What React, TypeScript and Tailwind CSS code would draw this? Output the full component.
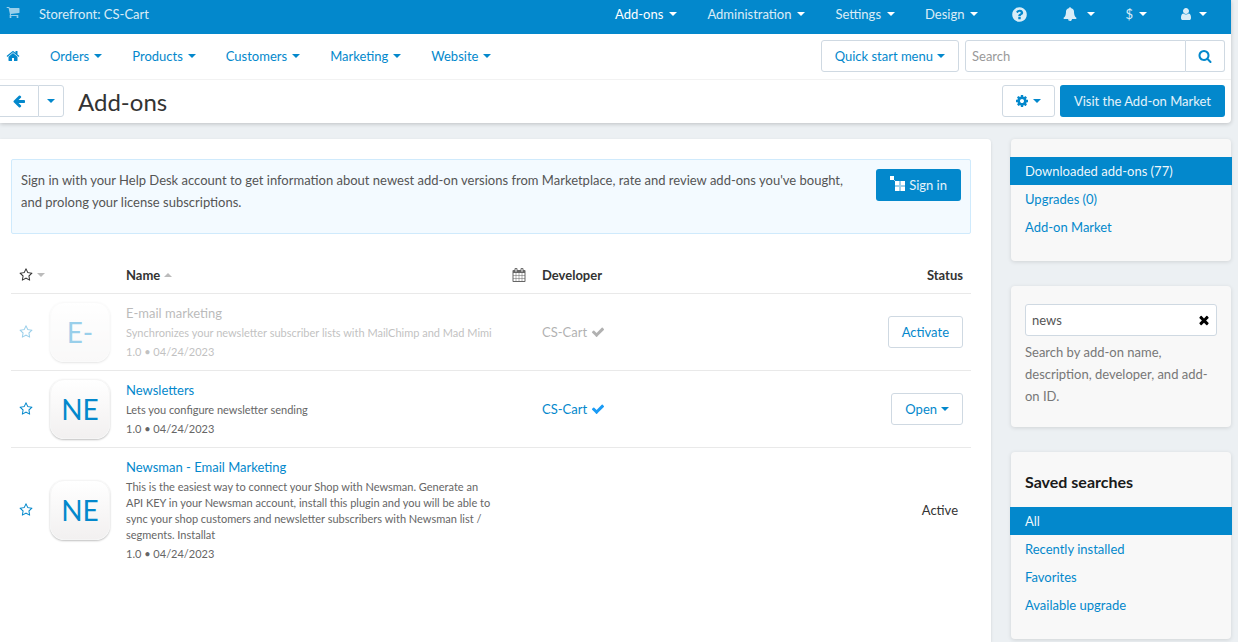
import { ReactNode } from "react";

const PATHS = {
  cart: "M704 1536q0 52-38 90t-90 38-90-38-38-90 38-90 90-38 90 38 38 90zm896 0q0 52-38 90t-90 38-90-38-38-90 38-90 90-38 90 38 38 90zm128-1088v512q0 24-16.5 42.5t-40.5 21.5l-1044 122q13 60 13 70 0 16-24 64h920q26 0 45 19t19 45-19 45-45 19h-1024q-26 0-45-19t-19-45q0-11 8-31.5t16-36 21.5-40 15.5-29.5l-177-823h-204q-26 0-45-19t-19-45 19-45 45-19h256q16 0 28.5 6.5t19.5 15.5 13 24.5 8 26 5.5 29.5 4.5 26h1201q26 0 45 19t19 45z",
  home: "M1472 992v480q0 26-19 45t-45 19h-384v-384h-256v384h-384q-26 0-45-19t-19-45v-480q0-1 .5-3t.5-3l575-474 575 474q1 2 1 6zm223-69l-62 74q-8 9-21 11h-3q-13 0-21-7l-692-577-692 577q-12 8-24 7-13-2-21-11l-62-74q-8-10-7-23.5t11-21.5l719-599q32-26 76-26t76 26l244 204v-195q0-14 9-23t23-9h192q14 0 23 9t9 23v408l219 182q10 8 11 21.5t-7 23.5z",
  search: "M1216 832q0-185-131.5-316.5t-316.5-131.5-316.5 131.5-131.5 316.5 131.5 316.5 316.5 131.5 316.5-131.5 131.5-316.5zm512 832q0 52-38 90t-90 38q-54 0-90-38l-343-342q-179 124-399 124-143 0-273.5-55.5t-225-150-150-225-55.5-273.5 55.5-273.5 150-225 225-150 273.5-55.5 273.5 55.5 225 150 150 225 55.5 273.5q0 220-124 399l343 343q37 37 37 90z",
  arrowLeft: "M1664 896v128q0 53-32.5 90.5t-84.5 37.5h-704l293 294q38 36 38 90t-38 90l-75 76q-37 37-90 37-52 0-91-37l-651-652q-37-37-37-90 0-52 37-91l651-650q38-38 91-38 52 0 90 38l75 74q38 38 38 91t-38 91l-293 293h704q52 0 84.5 37.5t32.5 90.5z",
  check: "M1671 566q0 40-28 68l-724 724-136 136q-28 28-68 28t-68-28l-136-136-362-362q-28-28-28-68t28-68l136-136q28-28 68-28t68 28l294 295 656-657q28-28 68-28t68 28l136 136q28 28 28 68z",
  times: "M1490 1322q0 40-28 68l-136 136q-28 28-68 28t-68-28l-294-294-294 294q-28 28-68 28t-68-28l-136-136q-28-28-28-68t28-68l294-294-294-294q-28-28-28-68t28-68l136-136q28-28 68-28t68 28l294 294 294-294q28-28 68-28t68 28l136 136q28 28 28 68t-28 68l-294 294 294 294q28 28 28 68z",
  cog: "M1152 896q0-106-75-181t-181-75-181 75-75 181 75 181 181 75 181-75 75-181zm512-109v222q0 12-8 23t-20 13l-185 28q-19 54-39 91 35 50 107 138 10 12 10 25t-9 23q-27 37-99 108t-94 71q-12 0-26-9l-138-108q-44 23-91 38-16 136-29 186-7 28-36 28h-222q-14 0-24.5-8.5t-11.5-21.5l-28-184q-49-16-90-37l-141 107q-10 9-25 9-14 0-25-11-126-114-165-168-7-10-7-23 0-12 8-23 15-21 51-66.5t54-70.5q-27-50-41-99l-183-27q-13-2-21-12.5t-8-23.5v-222q0-12 8-23t19-13l186-28q14-46 39-92-40-57-107-138-10-12-10-24 0-10 9-23 26-36 98.5-107.5t94.5-71.5q13 0 26 10l138 107q44-23 91-38 16-136 29-186 7-28 36-28h222q14 0 24.5 8.5t11.5 21.5l28 184q49 16 90 37l142-107q9-9 24-9 13 0 25 10 129 119 165 170 7 8 7 22 0 12-8 23-15 21-51 66.5t-54 70.5q26 50 41 98l183 28q13 2 21 12.5t8 23.5z",
  question: "M1024 1376v-192q0-14-9-23t-23-9h-192q-14 0-23 9t-9 23v192q0 14 9 23t23 9h192q14 0 23-9t9-23zm256-672q0-88-55.5-163t-138.5-116-170-41q-243 0-371 213-15 24 8 42l132 100q7 6 19 6 16 0 25-12 53-68 86-92 34-24 86-24 48 0 85.5 26t37.5 59q0 38-20 61t-68 45q-63 28-115.5 86.5t-52.5 125.5v36q0 14 9 23t23 9h192q14 0 23-9t9-23q0-19 21.5-49.5t54.5-49.5q32-18 49-28.5t46-35 44.5-48 28-60.5 12.5-81zm384 192q0 209-103 385.5t-279.5 279.5-385.5 103-385.5-103-279.5-279.5-103-385.5 103-385.5 279.5-279.5 385.5-103 385.5 103 279.5 279.5 103 385.5z",
  star: "M1201 1004l306-297-422-62-189-382-189 382-422 62 306 297-73 421 378-199 377 199zm527-357q0 22-26 48l-363 354 86 500q1 7 1 20 0 50-41 50-19 0-40-12l-449-236-449 236q-22 12-40 12-21 0-31.5-14.5t-10.5-35.5q0-6 2-20l86-500-364-354q-25-27-25-48 0-37 56-46l502-73 225-455q19-41 49-41t49 41l225 455 502 73q56 9 56 46z",
  bell: "M912 1696q0-16-16-16-59 0-101.5-42.5t-42.5-101.5q0-16-16-16t-16 16q0 73 51.5 124.5t124.5 51.5q16 0 16-16zm816-288q0 52-38 90t-90 38h-448q0 106-75 181t-181 75-181-75-75-181h-448q-52 0-90-38t-38-90q50-42 91-88t85-119.5 74.5-158.5 50-206 19.5-260q0-152 117-282.5t307-158.5q-8-19-8-39 0-40 28-68t68-28 68 28 28 68q0 20-8 39 190 28 307 158.5t117 282.5q0 139 19.5 260t50 206 74.5 158.5 85 119.5 91 88z",
  user: "M1536 1399q0 109-62.5 187t-150.5 78h-854q-88 0-150.5-78t-62.5-187q0-85 8.5-160.5t31.5-152 58.5-131 94-89 134.5-34.5q131 128 313 128t313-128q76 0 134.5 34.5t94 89 58.5 131 31.5 152 8.5 160.5zm-256-887q0 159-112.5 271.5t-271.5 112.5-271.5-112.5-112.5-271.5 112.5-271.5 271.5-112.5 271.5 112.5 112.5 271.5z",
  calendar: "M192 1664h288v-288h-288v288zm352 0h320v-288h-320v288zm-352-352h288v-320h-288v320zm352 0h320v-320h-320v320zm-352-384h288v-288h-288v288zm736 736h320v-288h-320v288zm-384-736h320v-288h-320v288zm768 736h288v-288h-288v288zm-384-352h320v-320h-320v320zm-352-864v-288q0-13-9.5-22.5t-22.5-9.5h-64q-13 0-22.5 9.5t-9.5 22.5v288q0 13 9.5 22.5t22.5 9.5h64q13 0 22.5-9.5t9.5-22.5zm736 864h288v-320h-288v320zm-384-384h320v-288h-320v288zm384 0h288v-288h-288v288zm32-480v-288q0-13-9.5-22.5t-22.5-9.5h-64q-13 0-22.5 9.5t-9.5 22.5v288q0 13 9.5 22.5t22.5 9.5h64q13 0 22.5-9.5t9.5-22.5zm384-64v1280q0 52-38 90t-90 38h-1408q-52 0-90-38t-38-90v-1280q0-52 38-90t90-38h128v-96q0-66 47-113t113-47h64q66 0 113 47t47 113v96h384v-96q0-66 47-113t113-47h64q66 0 113 47t47 113v96h128q52 0 90 38t38 90z",
};

const Icon = ({ name, className }: { name: keyof typeof PATHS; className: string }) => (
  <svg viewBox="0 0 1792 1792" fill="currentColor" className={className} aria-hidden="true">
    <path d={PATHS[name]} />
  </svg>
);

const Caret = () => (
  <span className="block border-x-4 border-t-4 border-x-transparent border-t-current" />
);

const btn =
  "flex h-8 items-center justify-center gap-1 rounded-[3px] border border-[#cfd9e2] bg-white text-[#0388cc] whitespace-nowrap";

interface Addon {
  initials: string;
  name: string;
  description: string;
  developer?: string;
  status: "disabled" | "open" | "active";
}

const addons: Addon[] = [
  {
    initials: "E-",
    name: "E-mail marketing",
    description: "Synchronizes your newsletter subscriber lists with MailChimp and Mad Mimi",
    developer: "CS-Cart",
    status: "disabled",
  },
  {
    initials: "NE",
    name: "Newsletters",
    description: "Lets you configure newsletter sending",
    developer: "CS-Cart",
    status: "open",
  },
  {
    initials: "NE",
    name: "Newsman - Email Marketing",
    description:
      "This is the easiest way to connect your Shop with Newsman. Generate an API KEY in your Newsman account, install this plugin and you will be able to sync your shop customers and newsletter subscribers with Newsman list / segments. Installat",
    status: "active",
  },
];

const TopItem = ({ label, active, children }: { label: string; active?: boolean; children?: ReactNode }) => (
  <button aria-label={label} className="flex items-center gap-[6px] text-white">
    <span className={active ? "" : "opacity-85"}>{children ?? label}</span>
    <Caret />
  </button>
);

const TopBar = () => (
  <div className="flex h-[34px] items-start justify-between bg-[#0388cc] pl-[6px] pr-6">
    <div className="flex h-7 items-center gap-[19px] text-white">
      <a href="#" aria-label="View storefront" className="mb-1">
        <Icon name="cart" className="h-[14px] w-[14px] opacity-60" />
      </a>
      <a href="#" className="opacity-85">Storefront: CS-Cart</a>
    </div>
    <nav className="flex h-7 items-center gap-[30px]">
      <TopItem label="Add-ons" active />
      <TopItem label="Administration" />
      <TopItem label="Settings" />
      <TopItem label="Design" />
      <button aria-label="Help" className="ml-[3px] mr-[5px] text-white opacity-85">
        <Icon name="question" className="h-[17px] w-[17px]" />
      </button>
      <button aria-label="Notifications" className="flex items-center gap-[10px] text-white">
        <Icon name="bell" className="h-[14px] w-[14px] opacity-85" />
        <Caret />
      </button>
      <TopItem label="Currency">$</TopItem>
      <button aria-label="Account" className="ml-[2px] flex items-center gap-[6px] text-white">
        <Icon name="user" className="h-[14px] w-[14px] opacity-85" />
        <Caret />
      </button>
    </nav>
  </div>
);

const MainMenu = () => (
  <div className="flex h-[46px] items-start border-b border-[#f2f2f2] px-[6px] pt-[6px]">
    <nav className="flex h-8 items-center gap-[30px] text-[#0388cc]">
      <a href="#" aria-label="Home">
        <Icon name="home" className="h-[14px] w-[14px]" />
      </a>
      {["Orders", "Products", "Customers", "Marketing", "Website"].map((item) => (
        <button key={item} className="flex items-center gap-[5px]">
          {item}
          <Caret />
        </button>
      ))}
    </nav>
    <div className="ml-auto flex gap-[6px]">
      <button className={`${btn} px-[13px]`}>
        Quick start menu
        <Caret />
      </button>
      <form className="flex" onSubmit={(e) => e.preventDefault()}>
        <input
          type="text"
          aria-label="Search"
          placeholder="Search"
          className="h-8 w-[221px] rounded-l-[3px] border border-[#cfd9e2] bg-white px-[6px] text-[#555] placeholder:text-[#999]"
        />
        <button
          type="submit"
          aria-label="Find"
          className="flex h-8 w-[39px] items-center justify-center rounded-r-[3px] border border-l-0 border-[#cfd9e2] text-[#0388cc]"
        >
          <Icon name="search" className="h-[14px] w-[14px]" />
        </button>
      </form>
    </div>
  </div>
);

const TitleBar = () => (
  <div className="flex h-[43px] items-start pr-[6px] pt-[5px]">
    <div className="flex text-[#0388cc]">
      <button aria-label="Back" className="flex h-8 w-[38px] items-center justify-center border-y border-[#cfd9e2]">
        <Icon name="arrowLeft" className="h-[14px] w-[14px]" />
      </button>
      <button
        aria-label="Recent pages"
        className="flex h-8 w-[26px] items-center justify-center rounded-r-[3px] border border-[#cfd9e2]"
      >
        <Caret />
      </button>
    </div>
    <h1 className="ml-[14px] text-[24px] leading-[34px] text-[#333]">Add-ons</h1>
    <div className="ml-auto flex gap-[5px]">
      <button aria-label="Settings" className={`${btn} w-[53px]`}>
        <Icon name="cog" className="h-[14px] w-[14px]" />
        <Caret />
      </button>
      <button className="h-8 rounded-[3px] bg-[#0388cc] px-[14px] text-white/90">Visit the Add-on Market</button>
    </div>
  </div>
);

const Notice = () => (
  <div className="flex min-h-[75px] items-start justify-between gap-5 rounded-[2px] border border-[#cfeafc] bg-[#f3faff] p-[9px]">
    <p className="leading-[22px] text-[#555]">
      Sign in with your Help Desk account to get information about newest add-on versions from Marketplace, rate and
      review add-ons you've bought, and prolong your license subscriptions.
    </p>
    <button className="flex h-8 shrink-0 items-center gap-1 rounded-[3px] bg-[#0388cc] px-[14px] text-white/90">
      <svg viewBox="0 0 15 15" className="mb-1 h-[15px] w-[15px]" shapeRendering="crispEdges" aria-hidden="true">
        <path fill="#fff" d="M0 0h4v4H0zM5 5h4v4H5zM11 5h4v4h-4zM5 11h4v4H5zM11 11h4v4h-4z" />
        <path fill="#9cd0eb" d="M4 4h1v1H4zM9 5h2v4H9zM5 9h10v2H5zM9 11h2v4H9z" />
      </svg>
      Sign in
    </button>
  </div>
);

const AddonRow = ({ addon }: { addon: Addon }) => {
  const disabled = addon.status === "disabled";
  const fade = disabled ? "opacity-40" : "";

  return (
    <tr className="border-t border-[#e9e9e9]">
      <td className="pl-2">
        <button aria-label={`Add ${addon.name} to favorites`} className={`flex text-[#0388cc] ${fade}`}>
          <Icon name="star" className="h-[14px] w-[14px]" />
        </button>
      </td>
      <td>
        <div
          className={`flex h-[60px] w-[60px] items-center justify-center rounded-[14px] border border-[#f5f5f5] bg-linear-to-b from-white to-[#f2f0f0] text-[28px] text-[#0388cc] shadow-[0_1px_2px_rgba(0,0,0,0.25)] ${fade}`}
        >
          {addon.initials}
        </div>
      </td>
      <td className="py-2">
        <div className={fade}>
          <a href="#" className={`mb-px block leading-[22px] ${disabled ? "text-[#555]" : "text-[#0388cc]"}`}>
            {addon.name}
          </a>
          <p className="mb-px text-[11px] leading-4 text-[#666]">{addon.description}</p>
          <p className="text-[11px] leading-5 text-[#666]">1.0 • 04/24/2023</p>
        </div>
      </td>
      <td />
      <td>
        {addon.developer && (
          <a href="#" className={`flex items-center gap-1 ${disabled ? "text-[#555] opacity-45" : "text-[#0388cc]"}`}>
            {addon.developer}
            <Icon name="check" className={`h-[14px] w-[14px] ${disabled ? "" : "text-[#1a9bf5]"}`} />
          </a>
        )}
      </td>
      <td className="pr-2">
        <div className="flex justify-end">
          {addon.status === "disabled" && <button className={`${btn} px-[13px]`}>Activate</button>}
          {addon.status === "open" && (
            <button className={`${btn} px-[13px]`}>
              Open
              <Caret />
            </button>
          )}
          {addon.status === "active" && <span className="pr-[5px] text-[#333]">Active</span>}
        </div>
      </td>
    </tr>
  );
};

const AddonsTable = () => (
  <table className="mt-5 w-full table-fixed border-collapse text-left">
    <colgroup>
      <col className="w-[39px]" />
      <col className="w-[76px]" />
      <col />
      <col className="w-[46px]" />
      <col className="w-[290px]" />
      <col className="w-[139px]" />
    </colgroup>
    <thead>
      <tr className="h-[39px] text-[#333]">
        <th className="pl-2 pt-[3px]">
          <button aria-label="Sort by favorites" className="flex items-center gap-1">
            <Icon name="star" className="h-[14px] w-[14px] shrink-0" />
            <span className="text-[#bbb]"><Caret /></span>
          </button>
        </th>
        <th />
        <th className="pt-[3px]">
          <button className="flex items-center gap-1 font-bold">
            Name
            <span className="border-x-4 border-b-4 border-x-transparent border-b-[#bbb]" />
          </button>
        </th>
        <th className="pt-[3px]">
          <button aria-label="Sort by install date" className="ml-4 flex text-[#666]">
            <Icon name="calendar" className="h-[14px] w-[14px]" />
          </button>
        </th>
        <th className="pt-[3px]">Developer</th>
        <th className="pr-2 pt-[3px] text-right">Status</th>
      </tr>
    </thead>
    <tbody>
      {addons.map((addon) => (
        <AddonRow key={addon.name} addon={addon} />
      ))}
    </tbody>
  </table>
);

const SideCard = ({ children }: { children: ReactNode }) => (
  <section className="rounded-[4px] bg-[#f8f8f8] pb-5 pt-[18px] shadow-[0_1px_4px_rgba(0,0,0,0.12)]">{children}</section>
);

const SideLinks = ({ items }: { items: string[] }) => (
  <ul>
    {items.map((item, i) => (
      <li key={item} className={i === 0 ? "-mx-px bg-[#0388cc] px-px text-white/95" : "text-[#0388cc]"}>
        <a href="#" className="block px-[14px] leading-7">{item}</a>
      </li>
    ))}
  </ul>
);

const Sidebar = () => (
  <aside className="flex w-[220px] shrink-0 flex-col gap-[25px]">
    <SideCard>
      <SideLinks items={["Downloaded add-ons (77)", "Upgrades (0)", "Add-on Market"]} />
    </SideCard>
    <SideCard>
      <div className="px-[14px]">
        <div className="flex h-8 items-center rounded-[3px] border border-[#cfd9e2] bg-white pr-[5px]">
          <input
            id="addon-search"
            type="text"
            defaultValue="news"
            className="h-full min-w-0 flex-1 px-[6px] text-[#555] outline-none"
          />
          <button aria-label="Clear" className="text-black">
            <Icon name="times" className="h-[14px] w-[14px]" />
          </button>
        </div>
        <label htmlFor="addon-search" className="mt-[5px] block leading-[22px] text-[#777]">
          Search by add-on name, description, developer, and add-on ID.
        </label>
      </div>
    </SideCard>
    <SideCard>
      <h2 className="px-[14px] pb-[13px] text-base leading-6 font-bold text-[#1a1a1a]">Saved searches</h2>
      <SideLinks items={["All", "Recently installed", "Favorites", "Available upgrade"]} />
    </SideCard>
  </aside>
);

export default function App() {
  return (
    <div className="flex min-h-screen flex-col bg-[#ecf0f3] pr-[7px] font-['Lato','Open_Sans',sans-serif] text-[13px] leading-5">
      <header className="rounded-br-[4px] bg-white shadow-[0_1px_4px_rgba(0,0,0,0.2)]">
        <TopBar />
        <MainMenu />
        <TitleBar />
      </header>
      <div className="mt-4 flex flex-1 gap-5">
        <main className="min-w-0 flex-1 rounded-tr-[4px] bg-white px-5 pl-[11px] pt-5 shadow-[0_1px_3px_rgba(0,0,0,0.12)]">
          <Notice />
          <AddonsTable />
        </main>
        <Sidebar />
      </div>
    </div>
  );
}
